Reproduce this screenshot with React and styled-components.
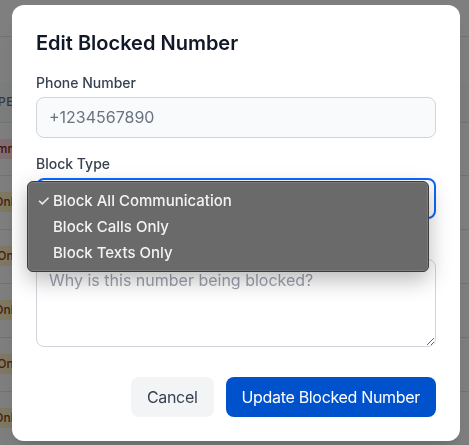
import React from 'react'
import styled, { createGlobalStyle } from 'styled-components'

const GlobalStyle = createGlobalStyle`
  html, body {
    margin: 0;
    padding: 0;
    background: #ffffff;
    font-family: Inter, "Noto Sans", sans-serif;
    overflow: hidden;
  }
  * { box-sizing: border-box; }
`

const Page = styled.div`
  width: 469px;
  height: 445px;
  overflow: hidden;
  background: #ffffff;
`

const TopBar = styled.div`
  height: 37px;
  border-bottom: 1px solid #e5e7eb;
`

const TableWrap = styled.div`
  margin-top: 45px;
  margin-left: -69px;
`

const Table = styled.table`
  border-collapse: collapse;
  width: 560px;
`

const HeadCell = styled.th`
  height: 40px;
  padding: 0 24px 0 ${p => p.$indent ?? 24}px;
  text-align: left;
  background: #f9fafb;
  color: #6b7280;
  font-size: 12px;
  font-weight: 500;
  letter-spacing: 0.05em;
  text-transform: uppercase;
  border-bottom: 1px solid #e5e7eb;
  white-space: nowrap;
`

const Cell = styled.td`
  height: ${p => p.$h || 54}px;
  padding: 0 24px;
  border-bottom: 1px solid #e5e7eb;
  font-size: 14px;
  color: #111827;
`

const Badge = styled.span`
  display: inline-flex;
  padding: 2px 8px;
  border-radius: 9999px;
  font-size: 12px;
  line-height: 16px;
  font-weight: 500;
  white-space: nowrap;
  background: ${p => (p.$tone === 'red' ? '#fee2e2' : '#fef3c7')};
  color: ${p => (p.$tone === 'red' ? '#991b1b' : '#92400e')};
`

const Overlay = styled.div`
  position: fixed;
  inset: 0;
  background: rgba(0, 0, 0, 0.5);
  display: flex;
  align-items: center;
  justify-content: center;
  padding-left: 3px;
`

const Modal = styled.div`
  width: 448px;
  background: #ffffff;
  border-radius: 12px;
  padding: 24px;
  box-shadow: 0 20px 25px -5px rgba(0, 0, 0, 0.1), 0 8px 10px -6px rgba(0, 0, 0, 0.1);
`

const Title = styled.h2`
  margin: 0 0 16px;
  font-size: 20px;
  line-height: 28px;
  font-weight: 600;
  color: #111827;
`

const Field = styled.div`
  position: relative;
  margin-bottom: 16px;
`

const Label = styled.label`
  display: block;
  margin-bottom: 4px;
  font-size: 14px;
  line-height: 20px;
  font-weight: 500;
  color: #374151;
`

const TextInput = styled.input`
  display: block;
  width: 100%;
  height: 41px;
  padding: 0 12px;
  border: 1px solid #d1d5db;
  border-radius: 8px;
  background: #f9fafb;
  color: #6b7280;
  font-family: inherit;
  font-size: 16px;
  outline: none;
`

const SelectBox = styled.div`
  position: relative;
  height: 41px;
  border: 2px solid #0f67fb;
  border-radius: 8px;
  background: #ffffff;
  display: flex;
  align-items: center;
  justify-content: flex-end;
  padding-right: 4px;
`

const Menu = styled.div`
  position: absolute;
  top: 1px;
  left: -11px;
  width: 402px;
  padding: 6px 0 5px;
  background: #6a6a6a;
  border: 1px solid #3c3c3c;
  border-radius: 6px;
  box-shadow: 0 8px 22px rgba(0, 0, 0, 0.28), inset 0 0 0 1px rgba(255, 255, 255, 0.12);
  z-index: 2;
`

const MenuItem = styled.div`
  position: relative;
  height: 26px;
  padding-left: 25px;
  display: flex;
  align-items: center;
  font-size: 15px;
  font-weight: 500;
  color: #f3f3f3;
`

const Check = styled.span`
  position: absolute;
  left: 9px;
  font-size: 15px;
  color: #e8e8e8;
`

const TextArea = styled.textarea`
  display: block;
  width: 100%;
  height: 88px;
  padding: 8px 12px;
  border: 1px solid #d1d5db;
  border-radius: 8px;
  background: #ffffff;
  font-family: inherit;
  font-size: 16px;
  line-height: 24px;
  color: #111827;
  outline: none;
  &::placeholder { color: #9ca3af; }
`

const Actions = styled.div`
  display: flex;
  justify-content: flex-end;
  gap: 12px;
  margin-top: 30px;
`

const Button = styled.button`
  height: 40px;
  padding: 0 16px;
  border: none;
  border-radius: 8px;
  font-family: inherit;
  font-size: 16px;
  letter-spacing: -0.02em;
  background: ${p => (p.$primary ? '#0052cc' : '#f3f4f6')};
  color: ${p => (p.$primary ? '#ffffff' : '#374151')};
`

const rows = [
  { type: 'All Communication', tone: 'red', h: 53 },
  { type: 'Calls Only' },
  { type: 'Texts Only' },
  { type: 'Calls Only' },
  { type: 'Texts Only' },
  { type: 'Calls Only' },
]

export default function App() {
  return (
    <Page>
      <GlobalStyle />
      <TopBar />
      <TableWrap>
        <Table>
          <thead>
            <tr>
              <HeadCell $indent={2}>Block Type</HeadCell>
              <HeadCell />
            </tr>
          </thead>
          <tbody>
            {rows.map((r, i) => (
              <tr key={i}>
                <Cell $h={r.h}><Badge $tone={r.tone}>{r.type}</Badge></Cell>
                <Cell $h={r.h} />
              </tr>
            ))}
          </tbody>
        </Table>
      </TableWrap>

      <Overlay>
        <Modal>
          <Title>Edit Blocked Number</Title>
          <Field>
            <Label>Phone Number</Label>
            <TextInput defaultValue="+1234567890" readOnly />
          </Field>
          <Field>
            <Label>Block Type</Label>
            <SelectBox>
              <svg width="8" height="12" viewBox="0 0 8 12">
                <path d="M1.5 4.5 L4 2 L6.5 4.5 M1.5 7.5 L4 10 L6.5 7.5" fill="none" stroke="#333" strokeWidth="1.3" />
              </svg>
              <Menu>
                <MenuItem><Check>✓</Check>Block All Communication</MenuItem>
                <MenuItem>Block Calls Only</MenuItem>
                <MenuItem>Block Texts Only</MenuItem>
              </Menu>
            </SelectBox>
          </Field>
          <Field>
            <Label>Reason (Optional)</Label>
            <TextArea placeholder="Why is this number being blocked?" />
          </Field>
          <Actions>
            <Button>Cancel</Button>
            <Button $primary>Update Blocked Number</Button>
          </Actions>
        </Modal>
      </Overlay>
    </Page>
  )
}
